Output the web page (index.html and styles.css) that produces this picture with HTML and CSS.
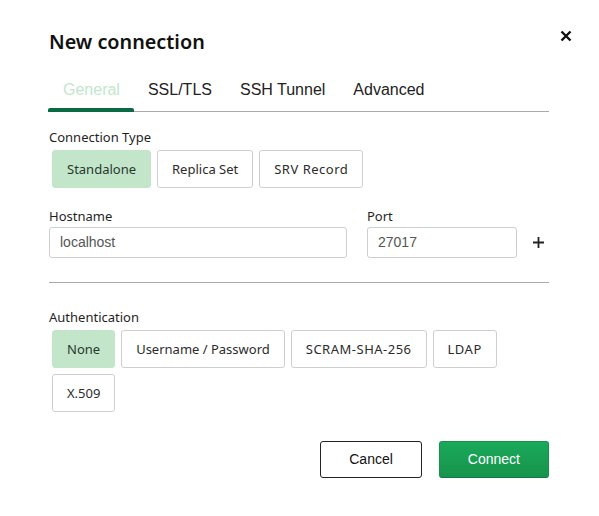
FILE: index.html
```html
<!DOCTYPE html>
<html lang="en">
<head>
<meta charset="utf-8">
<title>New connection</title>
<link rel="stylesheet" href="styles.css">
</head>
<body>
<div class="dialog">
  <header class="dialog-header">
    <h1 class="title">New connection</h1>
    <button class="close" aria-label="Close">
      <svg width="12" height="12" viewBox="0 0 12 12"><path d="M1.5 1.5 L10.5 10.5 M10.5 1.5 L1.5 10.5" stroke="#111" stroke-width="2.4" fill="none"/></svg>
    </button>
  </header>

  <nav class="tabs">
    <span class="tab active">General</span>
    <span class="tab">SSL/TLS</span>
    <span class="tab">SSH Tunnel</span>
    <span class="tab">Advanced</span>
  </nav>

  <section class="field">
    <div class="field-label">Connection Type</div>
    <div class="choices">
      <button class="choice selected">Standalone</button>
      <button class="choice">Replica Set</button>
      <button class="choice caps">SRV Record</button>
    </div>
  </section>

  <div class="host-row">
    <div class="host-col">
      <label class="input-label">Hostname</label>
      <input class="text-input" type="text" value="localhost">
    </div>
    <div class="port-col">
      <label class="input-label">Port</label>
      <input class="text-input" type="text" value="27017">
    </div>
    <button class="add" aria-label="Add host">
      <svg width="11" height="11" viewBox="0 0 11 11"><path d="M5.5 0 V11 M0 5.5 H11" stroke="#222" stroke-width="1.8" fill="none"/></svg>
    </button>
  </div>

  <hr class="sep">

  <section class="field">
    <div class="field-label">Authentication</div>
    <div class="choices">
      <button class="choice selected">None</button>
      <button class="choice">Username / Password</button>
      <button class="choice caps">SCRAM-SHA-256</button>
      <button class="choice caps">LDAP</button>
      <button class="choice">X.509</button>
    </div>
  </section>

  <footer class="actions">
    <button class="btn btn-cancel">Cancel</button>
    <button class="btn btn-connect">Connect</button>
  </footer>
</div>
</body>
</html>
```

FILE: styles.css
```css
* { box-sizing: border-box; }

body {
  margin: 0;
  background: #fff;
  font-family: "Noto Sans", "Open Sans", sans-serif;
  color: #1f1f1f;
}

.dialog {
  width: 599px;
  padding: 29px 50px 0 49px;
}

.dialog-header {
  display: flex;
  align-items: flex-start;
  justify-content: space-between;
  margin-right: -23.3px;
}

.title {
  margin: 0;
  font-size: 19.8px;
  font-weight: 600;
  line-height: 26px;
  color: #111;
}

.close {
  margin-top: 0.5px;
  padding: 0;
  border: 0;
  background: none;
  width: 12px;
  height: 12px;
  display: flex;
}

.tabs {
  margin-top: 26px;
  display: flex;
  border-bottom: 1px solid #aaa;
}

.tab {
  position: relative;
  padding: 0 14px 12px;
  font-family: "Liberation Sans", Arial, sans-serif;
  font-size: 16px;
  line-height: 18px;
  color: #222;
}

.tab.active {
  color: #c3e6cb;
}

.tab.active::after {
  content: "";
  position: absolute;
  left: -1px;
  right: 0;
  bottom: -1px;
  height: 4px;
  background: #0a6a46;
  border-radius: 2px 2px 0 0;
}

.field {
  margin-top: 15.6px;
}

.field-label,
.input-label {
  display: block;
  font-size: 13px;
  line-height: 18px;
  color: #1f1f1f;
}

.field-label {
  margin-bottom: 1.5px;
}

.choices {
  display: flex;
  flex-wrap: wrap;
}

.choice {
  margin: 3px;
  padding: 9px 14px;
  border: 1px solid #cfcfcf;
  border-radius: 3px;
  background: #fff;
  font-family: "Noto Sans", "Open Sans", sans-serif;
  font-size: 13px;
  line-height: 18px;
  color: #2b2b2b;
}

.choice.caps {
  letter-spacing: 0.5px;
}

.choice.selected {
  background: #c3e6cb;
  border-color: #c3e6cb;
  color: #27382b;
}

.host-row {
  margin-top: 15.6px;
  display: flex;
  align-items: flex-end;
}

.host-col { width: 298px; }

.port-col {
  width: 149.5px;
  margin-left: 20px;
}

.input-label {
  margin-bottom: 2px;
}

.text-input {
  display: block;
  width: 100%;
  height: 31px;
  padding: 0 10px;
  border: 1px solid #cfcfcf;
  border-radius: 3px;
  font-family: "Liberation Sans", Arial, sans-serif;
  font-size: 14px;
  color: #555;
  background: #fff;
  outline: none;
}

.add {
  margin-left: 16px;
  height: 31px;
  padding: 0;
  border: 0;
  background: none;
  display: flex;
  align-items: center;
}

.sep {
  margin: 24.3px 0 24.6px;
  border: 0;
  border-top: 1px solid #aaa;
  height: 0;
}

.actions {
  margin-top: 25.6px;
  display: flex;
  justify-content: flex-end;
  gap: 17px;
}

.btn {
  padding: 9px 28px;
  border-radius: 3px;
  font-family: "Liberation Sans", Arial, sans-serif;
  font-size: 14px;
  line-height: 17px;
}

.btn-cancel {
  background: #fff;
  border: 1px solid #222;
  color: #111;
}

.btn-connect {
  background: linear-gradient(#1aa95a, #17944c);
  border: 1px solid #17914b;
  border-bottom-color: #127a3e;
  color: #fff;
}
```
